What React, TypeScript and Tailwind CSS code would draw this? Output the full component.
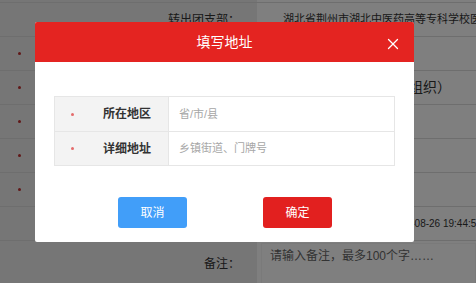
import { X } from "lucide-react";

interface PageRow {
  label: string;
  value: string;
  dot?: boolean;
  valueClass?: string;
}

const pageRows: PageRow[] = [
  { label: "转出团支部：", value: "湖北省荆州市湖北中医药高等专科学校医学院团委", valueClass: "pl-[26px] text-[11px]" },
  { label: "姓名：", value: "张晓明", dot: true },
  { label: "转入团组织：", value: "湖北中医药高专（团组织）", dot: true, valueClass: "pl-[26px] text-[14px]" },
  { label: "转入原因：", value: "升学", dot: true },
  { label: "联系电话：", value: "13800000000", dot: true },
  { label: "邮寄地址：", value: "", dot: true },
  { label: "申请时间：", value: "2017-08-26 19:44:51", valueClass: "pl-[132px] text-[10px]" },
];

const AddressModal = () => {
  return (
    <div className="absolute left-[35px] top-[22px] w-[379px] rounded-[2px] bg-white">
      <div className="relative flex h-[40px] items-center justify-center rounded-t-[2px] bg-[#e42421] text-[14px] text-white">
        填写地址
        <button className="absolute right-[12px] top-[13px] text-white">
          <X size={18} strokeWidth={1.7} />
        </button>
      </div>
      <div className="px-[19px] pt-[34px]">
        <div className="border border-[#e6e6e6] text-[12px]">
          {[
            { label: "所在地区", hint: "省/市/县" },
            { label: "详细地址", hint: "乡镇街道、门牌号" },
          ].map((r, i) => (
            <div key={r.label} className={`flex h-[34px] ${i > 0 ? "border-t border-[#e6e6e6]" : ""}`}>
              <div className="relative flex w-[114px] shrink-0 items-center justify-end border-r border-[#e6e6e6] bg-[#f3f3f3] pr-[17px] font-bold text-[#333]">
                <span className="absolute left-[16px] h-[3px] w-[3px] rounded-full bg-[#e46b6b]" />
                {r.label}
              </div>
              <div className="flex flex-1 items-center pl-[10px] text-[11px] text-[#a6a6a6]">{r.hint}</div>
            </div>
          ))}
        </div>
      </div>
      <div className="flex gap-[76px] pb-[14px] pl-[83px] pt-[31px]">
        <button className="h-[31px] w-[69px] rounded-[3px] bg-[#419ef9] text-[12px] text-white">取消</button>
        <button className="h-[31px] w-[69px] rounded-[3px] bg-[#e2201f] text-[12px] text-white">确定</button>
      </div>
    </div>
  );
};

export default function App() {
  return (
    <div className="relative h-[283px] w-[476px] overflow-hidden bg-white font-['Liberation_Sans','Noto_Sans_CJK_SC',sans-serif] text-[#333]">
      <div className="flex h-[3px] border-b border-[#dcdcdc]">
        <div className="w-[257px] shrink-0 bg-[#ececec]" />
      </div>
      {pageRows.map((r) => (
        <div key={r.label} className="flex h-[34px] border-b border-[#dcdcdc]">
          <div className="relative flex w-[257px] shrink-0 items-center justify-end bg-[#ececec] pr-[17px] text-[12px]">
            {r.dot && <span className="absolute left-[18px] h-[3px] w-[3px] rounded-full bg-[#c03030]" />}
            {r.label}
          </div>
          <div className={`flex min-w-0 flex-1 items-center whitespace-nowrap ${r.valueClass ?? "pl-[26px] text-[12px]"}`}>
            {r.value}
          </div>
        </div>
      ))}
      <div className="flex h-[60px]">
        <div className="flex w-[257px] shrink-0 items-start justify-end bg-[#ececec] pr-[17px] pt-[14px] text-[12px]">备注：</div>
        <div className="min-w-0 flex-1 pl-[4px] pt-[2px]">
          <div className="h-[52px] whitespace-nowrap border border-[#f4f4f4] px-[8px] pt-[3px] text-[12px] text-[#666]">
            请输入备注，最多100个字……
          </div>
        </div>
      </div>
      <div className="absolute inset-0 bg-black/50" />
      <AddressModal />
    </div>
  );
}
